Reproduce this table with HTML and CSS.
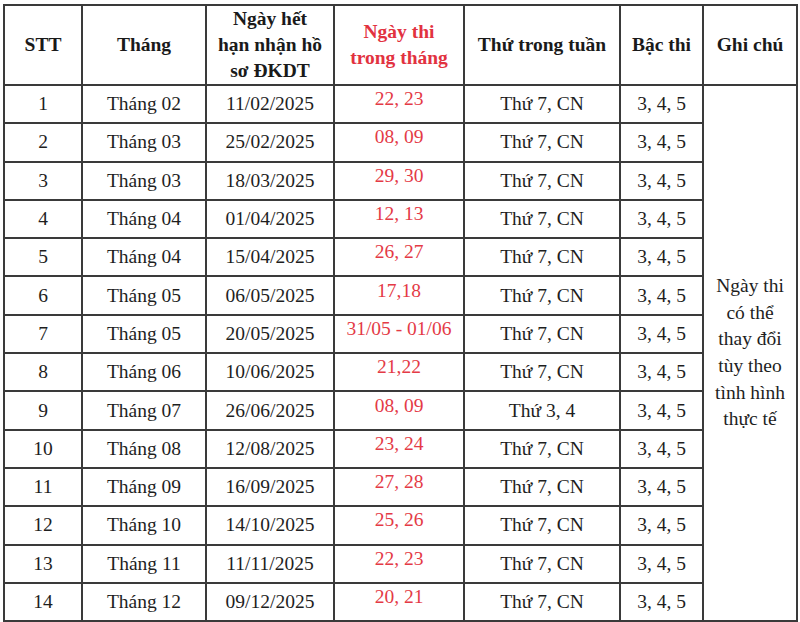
FILE: index.html
```html
<!DOCTYPE html>
<html lang="vi">
<head>
<meta charset="utf-8">
<title>Lịch thi</title>
<link rel="stylesheet" href="styles.css">
</head>
<body>
<table class="schedule">
  <colgroup>
    <col class="c-stt"><col class="c-month"><col class="c-deadline"><col class="c-date"><col class="c-weekday"><col class="c-level"><col class="c-note">
  </colgroup>
  <thead>
    <tr class="head-row">
      <th>STT</th>
      <th>Tháng</th>
      <th>Ngày hết<br>hạn nhận hồ<br>sơ ĐKDT</th>
      <th class="red">Ngày thi<br>trong tháng</th>
      <th>Thứ trong tuần</th>
      <th>Bậc thi</th>
      <th>Ghi chú</th>
    </tr>
  </thead>
  <tbody>
    <tr><td>1</td><td>Tháng 02</td><td>11/02/2025</td><td class="red">22, 23</td><td>Thứ 7, CN</td><td>3, 4, 5</td>
      <td class="note" rowspan="14">Ngày thi<br>có thể<br>thay đổi<br>tùy theo<br>tình hình<br>thực tế</td></tr>
    <tr><td>2</td><td>Tháng 03</td><td>25/02/2025</td><td class="red">08, 09</td><td>Thứ 7, CN</td><td>3, 4, 5</td></tr>
    <tr><td>3</td><td>Tháng 03</td><td>18/03/2025</td><td class="red">29, 30</td><td>Thứ 7, CN</td><td>3, 4, 5</td></tr>
    <tr><td>4</td><td>Tháng 04</td><td>01/04/2025</td><td class="red">12, 13</td><td>Thứ 7, CN</td><td>3, 4, 5</td></tr>
    <tr><td>5</td><td>Tháng 04</td><td>15/04/2025</td><td class="red">26, 27</td><td>Thứ 7, CN</td><td>3, 4, 5</td></tr>
    <tr><td>6</td><td>Tháng 05</td><td>06/05/2025</td><td class="red">17,18</td><td>Thứ 7, CN</td><td>3, 4, 5</td></tr>
    <tr><td>7</td><td>Tháng 05</td><td>20/05/2025</td><td class="red">31/05 - 01/06</td><td>Thứ 7, CN</td><td>3, 4, 5</td></tr>
    <tr><td>8</td><td>Tháng 06</td><td>10/06/2025</td><td class="red">21,22</td><td>Thứ 7, CN</td><td>3, 4, 5</td></tr>
    <tr><td>9</td><td>Tháng 07</td><td>26/06/2025</td><td class="red">08, 09</td><td>Thứ 3, 4</td><td>3, 4, 5</td></tr>
    <tr><td>10</td><td>Tháng 08</td><td>12/08/2025</td><td class="red">23, 24</td><td>Thứ 7, CN</td><td>3, 4, 5</td></tr>
    <tr><td>11</td><td>Tháng 09</td><td>16/09/2025</td><td class="red">27, 28</td><td>Thứ 7, CN</td><td>3, 4, 5</td></tr>
    <tr><td>12</td><td>Tháng 10</td><td>14/10/2025</td><td class="red">25, 26</td><td>Thứ 7, CN</td><td>3, 4, 5</td></tr>
    <tr><td>13</td><td>Tháng 11</td><td>11/11/2025</td><td class="red">22, 23</td><td>Thứ 7, CN</td><td>3, 4, 5</td></tr>
    <tr><td>14</td><td>Tháng 12</td><td>09/12/2025</td><td class="red">20, 21</td><td>Thứ 7, CN</td><td>3, 4, 5</td></tr>
  </tbody>
</table>
</body>
</html>
```

FILE: styles.css
```css
html, body {
  margin: 0;
  background: #ffffff;
}
body {
  padding: 4px 0 0 3px;
  font-family: "Liberation Serif", "Times New Roman", serif;
  color: #1e1e1e;
}
.schedule {
  border-collapse: collapse;
  table-layout: fixed;
  width: 793px;
  font-size: 19.5px;
  font-family: "Liberation Serif", "Times New Roman", serif;
}
.c-stt { width: 78px; }
.c-month { width: 124px; }
.c-deadline { width: 128px; }
.c-date { width: 130px; }
.c-weekday { width: 156px; }
.c-level { width: 83px; }
.c-note { width: 94px; }

.schedule th,
.schedule td {
  border: 2px solid #3a3a3a;
  text-align: center;
  vertical-align: middle;
  padding: 0 4px;
}
.schedule th {
  font-weight: bold;
  line-height: 26px;
  color: #1a1a1a;
}
.head-row { height: 80px; }
.schedule tbody tr { height: 38.3px; }
.schedule td { line-height: 24px; }
.schedule td.red {
  color: #e43a46;
  padding-bottom: 10px;
}
.schedule th.red { color: #e2323f; }
.schedule td.note {
  line-height: 26.6px;
  padding: 0 6px;
}
```
